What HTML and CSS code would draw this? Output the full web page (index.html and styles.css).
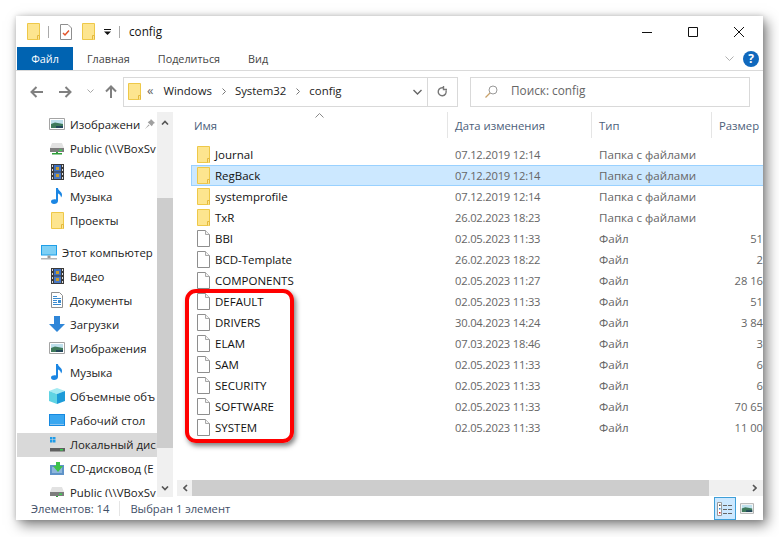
FILE: index.html
```html
<!DOCTYPE html>
<html lang="ru">
<head>
    <meta charset="UTF-8">
    <title>config</title>
    <link rel="stylesheet" href="styles.css">
</head>
<body>
<svg class="defs" width="0" height="0">
    <symbol id="folder" viewBox="0 0 13 17">
        <path d="M.5.5h12v16H.5z" fill="#fde58f" stroke="#eec849"/>
        <path d="M10.5 16.5v-4h2v4" fill="#fde58f" stroke="#e4b93c"/>
    </symbol>
    <symbol id="file" viewBox="0 0 13 17">
        <path d="M.5.5h8l4 4v12H.5z" fill="#fff" stroke="#8e8e8e"/>
        <path d="M8.5.5v4h4" fill="#f2f2f2" stroke="#a8a8a8"/>
    </symbol>
    <symbol id="picture" viewBox="0 0 16 12">
        <path d="M.5.5h15v11H.5z" fill="#fff" stroke="#a4a4a4"/>
        <path d="M2 2h12v5H2z" fill="#bfe0ec"/>
        <path d="M2 6l4-1.500 8 1.500v4H2z" fill="#3f7a5c"/>
        <path d="M7 8h7v2H7z" fill="#23475a"/>
    </symbol>
    <symbol id="net" viewBox="0 0 14 13">
        <path d="M2 1h10l2 5H0z" fill="#e2e2e2"/>
        <path d="M0 6h14v4H0z" fill="#7d7d7d"/>
        <path d="M6 10h2v1h4v1.500H2V11h4z" fill="#2f9e3a"/>
        <path d="M9 7.500h3V9H9z" fill="#3fcf54"/>
    </symbol>
    <symbol id="video" viewBox="0 0 13 16">
        <path d="M0 0h13v16H0z" fill="#3a3a3a"/>
        <path d="M3 1h7v6.500H3z" fill="#3c6fc0"/>
        <path d="M3 8.500h7V15H3z" fill="#4a79c4"/>
        <path d="M5 3h3v3H5zM5 10h3v3H5z" fill="#c59a2f"/>
        <path d="M1 1h1v2H1zM1 5h1v2H1zM1 9h1v2H1zM1 13h1v2H1zM11 1h1v2h-1zM11 5h1v2h-1zM11 9h1v2h-1zM11 13h1v2h-1z" fill="#ddd"/>
    </symbol>
    <symbol id="music" viewBox="0 0 12 16">
        <path d="M5 0h2c0 3 4 3.500 4 7 0 1-.5 2-1 2.500 0-2-1.500-3.500-3-4V13c0 2-2 3-4 3s-3-1-3-2.500S2.500 11 5 11.500z" fill="#1b86e3"/>
    </symbol>
    <symbol id="computer" viewBox="0 0 16 15">
        <path d="M0 0h16v10.500H0z" fill="#1f9fe8"/>
        <path d="M1 1h14v8.500H1z" fill="#7fd0f5"/>
        <path d="M6.500 10.500h3V13h-3z" fill="#9a9a9a"/>
        <path d="M0 13h16v1.500H0z" fill="#b5b5b5"/>
    </symbol>
    <symbol id="docs" viewBox="0 0 12 16">
        <path d="M.5.5h8l3 3v12H.5z" fill="#fff" stroke="#8e8e8e"/>
        <path d="M2 4h4v1H2zM2 6h8v1H2zM2 8h4v1H2zM7 8h3v3H7zM2 10h4v1H2zM2 12h8v1H2z" fill="#3b8bd0"/>
    </symbol>
    <symbol id="down" viewBox="0 0 16 16">
        <path d="M5 0h6v8h5l-8 8-8-8h5z" fill="#2f86d8"/>
    </symbol>
    <symbol id="cube" viewBox="0 0 16 16">
        <path d="M8 0l8 3-8 3-8-3z" fill="#a4eaf2"/>
        <path d="M0 3l8 3v10l-8-3z" fill="#5fd3e3"/>
        <path d="M16 3L8 6v10l8-3z" fill="#1c9bd8"/>
    </symbol>
    <symbol id="desktop" viewBox="0 0 16 12">
        <path d="M0 0h16v12H0z" fill="#1689e0"/>
        <path d="M1 1h14v9H1z" fill="#39a7f0"/>
        <path d="M1 10.500h14v.5H1z" fill="#fff"/>
    </symbol>
    <symbol id="localdisk" viewBox="0 0 15 15">
        <path d="M0 0h2.500v2.500H0zM3 0h2.500v2.500H3zM0 3h2.500v2.500H0zM3 3h2.500v2.500H3z" fill="#1f9be8"/>
        <path d="M3 8h9l3 3H0z" fill="#dcdcdc"/>
        <path d="M0 11h15v3.500H0z" fill="#5f5f5f"/>
        <path d="M10 12h3v1.500h-3z" fill="#39d04f"/>
    </symbol>
    <symbol id="cd" viewBox="0 0 14 13">
        <path d="M0 3h14v10H0z" fill="#5f93c8"/>
        <path d="M2 5h10v6H2z" fill="#8eb6dc"/>
        <path d="M6 0h4v4h3l-5 6-5-6h3z" fill="#3ec24a"/>
    </symbol>
</svg>

<div class="window">
    <div class="titlebar">
        <svg class="ico-folder"><use href="#folder"/></svg>
        <span class="sep"></span>
        <svg class="qa-check" viewBox="0 0 12 16">
            <path d="M.5.500h7.500l3.500 3.500v11.500H.5z" fill="#fff" stroke="#8e8e8e"/>
            <path d="M3 9l2 2 4-4.500" fill="none" stroke="#e2552a" stroke-width="1.500"/>
        </svg>
        <svg class="ico-folder"><use href="#folder"/></svg>
        <svg class="qa-drop" viewBox="0 0 7 6">
            <path d="M0 0h7v1H0z" fill="#111"/>
            <path d="M0 2.500h7L3.500 6z" fill="#111"/>
        </svg>
        <span class="sep"></span>
        <span class="title">config</span>
        <div class="win-btns">
            <svg viewBox="0 0 10 10"><path d="M0 5.500h10" stroke="#111" fill="none"/></svg>
            <svg viewBox="0 0 10 10"><path d="M.5.500h9v9h-9z" stroke="#111" fill="none"/></svg>
            <svg viewBox="0 0 10 10"><path d="M0 0l10 10M10 0L0 10" stroke="#111" fill="none"/></svg>
        </div>
    </div>

    <div class="ribbon">
        <a class="tab tab-file">Файл</a>
        <a class="tab tab-home">Главная</a>
        <a class="tab tab-share">Поделиться</a>
        <a class="tab">Вид</a>
        <svg class="ribbon-chev" viewBox="0 0 9 5"><path d="M.5.500l4 4 4-4" fill="none" stroke="#b0b0b0"/></svg>
        <span class="help">?</span>
    </div>

    <div class="navbar">
        <svg class="nav-arrow" viewBox="0 0 13 12"><path d="M13 6H1.500M6.500 1l-5 5 5 5" fill="none" stroke="#808080" stroke-width="2"/></svg>
        <svg class="nav-arrow nav-forward" viewBox="0 0 13 12"><path d="M0 6h11.500M6.500 1l5 5-5 5" fill="none" stroke="#808080" stroke-width="2"/></svg>
        <svg class="nav-drop" viewBox="0 0 7 4"><path d="M.5.500l3 3 3-3" fill="none" stroke="#a8a8a8"/></svg>
        <svg class="nav-up" viewBox="0 0 12 13"><path d="M6 13V1.500M1 6.500l5-5 5 5" fill="none" stroke="#808080" stroke-width="2"/></svg>
        <div class="address">
            <svg class="ico-folder"><use href="#folder"/></svg>
            <span class="crumb-more">«</span>
            <span class="crumb">Windows</span>
            <svg class="crumb-chev" viewBox="0 0 4 7"><path d="M.5.500l3 3-3 3" fill="none" stroke="#777"/></svg>
            <span class="crumb">System32</span>
            <svg class="crumb-chev" viewBox="0 0 4 7"><path d="M.5.500l3 3-3 3" fill="none" stroke="#777"/></svg>
            <span class="crumb">config</span>
            <svg class="addr-drop" viewBox="0 0 9 6"><path d="M.5 1l4 4 4-4" fill="none" stroke="#666" stroke-width="1.400"/></svg>
            <div class="addr-refresh">
                <svg viewBox="0 0 11 12"><path d="M9 4.500a4 4 0 1 1-2-2.300M6.500 0v3.500H10" fill="none" stroke="#777" stroke-width="1.400"/></svg>
            </div>
        </div>
        <div class="search">
            <svg viewBox="0 0 13 13"><circle cx="8" cy="5" r="4" fill="none" stroke="#999"/><path d="M5 8l-4.500 4.500" stroke="#c9a26a" stroke-width="1.200"/></svg>
            <span class="search-text">Поиск: config</span>
        </div>
    </div>

    <div class="body">
        <div class="sidebar">
            <div class="tree">
                <div class="tree-item"><svg class="i16x12"><use href="#picture"/></svg><span class="lbl lbl-pin">Изображени</span>
                    <svg class="pin" viewBox="0 0 11 11"><path d="M6.500 0L11 4.500 9.500 5 7.500 8 3 3.500 6 1.500zM4 6l-4 5 5-4z" fill="#a0a0a0"/></svg></div>
                <div class="tree-item"><svg class="i14x13"><use href="#net"/></svg><span class="lbl">Public (\\VBoxSv</span></div>
                <div class="tree-item"><svg class="i13x16"><use href="#video"/></svg><span class="lbl">Видео</span></div>
                <div class="tree-item"><svg class="i12x16"><use href="#music"/></svg><span class="lbl">Музыка</span></div>
                <div class="tree-item"><svg class="ico-folder"><use href="#folder"/></svg><span class="lbl">Проекты</span></div>
                <div class="tree-item tree-root"><svg class="i16x15"><use href="#computer"/></svg><span class="lbl">Этот компьютер</span></div>
                <div class="tree-item"><svg class="i13x16"><use href="#video"/></svg><span class="lbl">Видео</span></div>
                <div class="tree-item"><svg class="i12x16"><use href="#docs"/></svg><span class="lbl">Документы</span></div>
                <div class="tree-item"><svg class="i16x16"><use href="#down"/></svg><span class="lbl">Загрузки</span></div>
                <div class="tree-item"><svg class="i16x12"><use href="#picture"/></svg><span class="lbl">Изображения</span></div>
                <div class="tree-item"><svg class="i12x16"><use href="#music"/></svg><span class="lbl">Музыка</span></div>
                <div class="tree-item"><svg class="i16x16"><use href="#cube"/></svg><span class="lbl">Объемные объ</span></div>
                <div class="tree-item"><svg class="i16x12"><use href="#desktop"/></svg><span class="lbl">Рабочий стол</span></div>
                <div class="tree-item is-current"><svg class="i15x15"><use href="#localdisk"/></svg><span class="lbl">Локальный дис</span></div>
                <div class="tree-item"><svg class="i14x13"><use href="#cd"/></svg><span class="lbl">CD-дисковод (E</span></div>
                <div class="tree-item"><svg class="i14x13"><use href="#net"/></svg><span class="lbl">Public (\\VBoxSv</span></div>
            </div>
            <div class="vscroll">
                <svg viewBox="0 0 8 5"><path d="M1 4.500l3-3 3 3" fill="none" stroke="#555" stroke-width="1.600"/></svg>
                <div class="vscroll-track"><div class="vscroll-thumb"></div></div>
                <svg viewBox="0 0 8 5"><path d="M1 .500l3 3 3-3" fill="none" stroke="#555" stroke-width="1.600"/></svg>
            </div>
        </div>

        <div class="main">
            <svg class="sort-mark" viewBox="0 0 9 5"><path d="M.5 4.500l4-4 4 4" fill="none" stroke="#888"/></svg>
            <div class="cols">
                <div class="col col-name">Имя</div>
                <div class="col col-date">Дата изменения</div>
                <div class="col col-type">Тип</div>
                <div class="col col-size">Размер</div>
            </div>
            <div class="rows">
                <div class="row"><div class="cell-name"><svg class="ico-folder"><use href="#folder"/></svg>Journal</div><div class="cell-date">07.12.2019 12:14</div><div class="cell-type">Папка с файлами</div><div class="cell-size"></div></div>
                <div class="row is-selected"><div class="cell-name"><svg class="ico-folder"><use href="#folder"/></svg>RegBack</div><div class="cell-date">07.12.2019 12:14</div><div class="cell-type">Папка с файлами</div><div class="cell-size"></div></div>
                <div class="row"><div class="cell-name"><svg class="ico-folder"><use href="#folder"/></svg>systemprofile</div><div class="cell-date">07.12.2019 12:14</div><div class="cell-type">Папка с файлами</div><div class="cell-size"></div></div>
                <div class="row"><div class="cell-name"><svg class="ico-folder"><use href="#folder"/></svg>TxR</div><div class="cell-date">26.02.2023 18:23</div><div class="cell-type">Папка с файлами</div><div class="cell-size"></div></div>
                <div class="row"><div class="cell-name"><svg class="ico-folder"><use href="#file"/></svg>BBI</div><div class="cell-date">02.05.2023 11:33</div><div class="cell-type">Файл</div><div class="cell-size">51</div></div>
                <div class="row"><div class="cell-name"><svg class="ico-folder"><use href="#file"/></svg>BCD-Template</div><div class="cell-date">26.02.2023 18:22</div><div class="cell-type">Файл</div><div class="cell-size">2</div></div>
                <div class="row"><div class="cell-name"><svg class="ico-folder"><use href="#file"/></svg>COMPONENTS</div><div class="cell-date">02.05.2023 11:27</div><div class="cell-type">Файл</div><div class="cell-size">28 16</div></div>
                <div class="row"><div class="cell-name"><svg class="ico-folder"><use href="#file"/></svg>DEFAULT</div><div class="cell-date">02.05.2023 11:33</div><div class="cell-type">Файл</div><div class="cell-size">51</div></div>
                <div class="row"><div class="cell-name"><svg class="ico-folder"><use href="#file"/></svg>DRIVERS</div><div class="cell-date">30.04.2023 14:24</div><div class="cell-type">Файл</div><div class="cell-size">3 84</div></div>
                <div class="row"><div class="cell-name"><svg class="ico-folder"><use href="#file"/></svg>ELAM</div><div class="cell-date">07.03.2023 18:46</div><div class="cell-type">Файл</div><div class="cell-size">3</div></div>
                <div class="row"><div class="cell-name"><svg class="ico-folder"><use href="#file"/></svg>SAM</div><div class="cell-date">02.05.2023 11:33</div><div class="cell-type">Файл</div><div class="cell-size">6</div></div>
                <div class="row"><div class="cell-name"><svg class="ico-folder"><use href="#file"/></svg>SECURITY</div><div class="cell-date">02.05.2023 11:33</div><div class="cell-type">Файл</div><div class="cell-size">6</div></div>
                <div class="row"><div class="cell-name"><svg class="ico-folder"><use href="#file"/></svg>SOFTWARE</div><div class="cell-date">02.05.2023 11:33</div><div class="cell-type">Файл</div><div class="cell-size">70 65</div></div>
                <div class="row"><div class="cell-name"><svg class="ico-folder"><use href="#file"/></svg>SYSTEM</div><div class="cell-date">02.05.2023 11:33</div><div class="cell-type">Файл</div><div class="cell-size">11 00</div></div>
            </div>
            <div class="hscroll">
                <svg class="hs-arrow" viewBox="0 0 5 8"><path d="M4 1L1 4l3 3" fill="none" stroke="#555" stroke-width="1.600"/></svg>
                <div class="hs-thumb"></div>
                <svg class="hs-arrow" viewBox="0 0 5 8"><path d="M1 1l3 3-3 3" fill="none" stroke="#555" stroke-width="1.600"/></svg>
            </div>
            <div class="highlight-box"></div>
        </div>
    </div>

    <div class="statusbar">
        <span class="st-count">Элементов: 14</span>
        <span class="st-selected">Выбран 1 элемент</span>
        <div class="view-btns">
            <span class="view-btn is-on">
                <svg viewBox="0 0 16 14"><path d="M.5.500h4v13h-4z" fill="#fff" stroke="#999"/><path d="M2 2.500h1.500V4H2z" fill="#555"/><path d="M2 6h1.500v1.500H2z" fill="#2a8fdc"/><path d="M2 10h1.500v1.500H2z" fill="#d22"/><path d="M6 3h4v1H6zM11 3h4v1h-4zM6 7h4v1H6zM11 7h4v1h-4zM6 11h4v1H6zM11 11h4v1h-4z" fill="#666"/></svg>
            </span>
            <span class="view-btn"><svg class="i14x12"><use href="#picture"/></svg></span>
        </div>
    </div>
</div>
</body>
</html>
```

FILE: styles.css
```css
* {
    box-sizing: border-box;
}

html, body {
    height: 100%;
}

body {
    margin: 0;
    padding: 16px 16px 17px 16px;
    background: #fff;
    font-family: "Open Sans", "Noto Sans", sans-serif;
    font-size: 11.500px;
    color: #222;
    overflow: hidden;
}

.defs {
    position: absolute;
}

svg {
    display: block;
    flex: none;
}

.window {
    width: 747px;
    height: 504px;
    background: #fff;
    display: flex;
    flex-direction: column;
    overflow: hidden;
    box-shadow: 4px 5px 12px rgba(0, 0, 0, 0.5), 0 0 5px rgba(0, 0, 0, 0.15);
}

/* title bar */
.titlebar {
    height: 31px;
    display: flex;
    align-items: center;
    padding-left: 11px;
    flex: none;
}

.ico-folder {
    width: 13px;
    height: 17px;
}

.sep {
    width: 1px;
    height: 12px;
    background: #aaa;
    margin: 0 11px 0 8px;
}

.qa-check {
    width: 12px;
    height: 16px;
    margin-right: 10px;
}

.qa-drop {
    width: 7px;
    height: 6px;
    margin-left: 9px;
}

.title {
    margin: -2px 0 0 -2px;
    font-size: 11.700px;
    color: #111;
}

.win-btns {
    margin-left: auto;
    display: flex;
    gap: 36px;
    padding-right: 19px;
}

.win-btns svg {
    width: 10px;
    height: 10px;
}

/* ribbon */
.ribbon {
    height: 24px;
    flex: none;
    display: flex;
    align-items: center;
    border-bottom: 1px solid #dadada;
    padding-left: 1px;
    font-size: 10.800px;
    color: #444;
}

.tab {
    display: block;
    line-height: 23px;
    padding: 0 11px;
}

.tab-file {
    width: 56px;
    text-align: center;
    padding: 0;
    background: #0063b1;
    color: #fff;
    margin-right: 4px;
}

.tab-home {
    margin-right: 6px;
    padding-left: 10px;
}

.tab-share {
    margin-right: 6px;
}

.ribbon-chev {
    width: 9px;
    height: 5px;
    margin-left: auto;
    margin-right: 9px;
}

.help {
    width: 16px;
    height: 16px;
    border-radius: 50%;
    background: #0f68bd;
    color: #fff;
    font-weight: 700;
    font-size: 12px;
    line-height: 16px;
    text-align: center;
    margin-right: 4px;
}

/* nav bar */
.navbar {
    height: 41px;
    flex: none;
    display: flex;
    align-items: center;
    padding-left: 14px;
}

.nav-arrow {
    width: 13px;
    height: 12px;
    margin-right: 16px;
}

.nav-drop {
    width: 7px;
    height: 4px;
    margin: 0 11px 2px -1px;
}

.nav-up {
    width: 12px;
    height: 13px;
    margin-right: 6px;
}

.address {
    width: 335px;
    height: 30px;
    border: 1px solid #d9d9d9;
    display: flex;
    align-items: center;
    padding-left: 4px;
    font-size: 11.400px;
    color: #222;
}

.crumb {
    margin-top: -2px;
}

.crumb-more {
    margin: -3px 10px 0 6px;
    font-size: 13px;
    color: #666;
}

.crumb-chev {
    width: 4px;
    height: 7px;
    margin: 0 9px 0 10px;
}

.addr-drop {
    width: 9px;
    height: 6px;
    margin-left: auto;
    margin-right: 5px;
}

.addr-refresh {
    width: 30px;
    height: 100%;
    border-left: 1px solid #d9d9d9;
    display: flex;
    align-items: center;
    justify-content: center;
}

.addr-refresh svg {
    width: 11px;
    height: 12px;
}

.search {
    width: 280px;
    height: 30px;
    margin-left: 12px;
    border: 1px solid #d9d9d9;
    display: flex;
    align-items: center;
    padding-left: 14px;
    font-size: 11.800px;
    color: #666;
}

.search svg {
    width: 13px;
    height: 13px;
    margin-right: 13px;
}

.search-text {
    margin-top: -3px;
}

/* body */
.body {
    flex: 1;
    min-height: 0;
    display: flex;
}

.sidebar {
    width: 157px;
    flex: none;
    display: flex;
    padding-left: 1px;
}

.tree {
    width: 140px;
    flex: none;
    overflow: hidden;
    padding-top: 1px;
}

.tree-item {
    height: 24px;
    display: flex;
    align-items: center;
    padding-left: 32px;
    padding-bottom: 2px;
    white-space: nowrap;
    color: #222;
    font-size: 11.400px;
}

.tree-item > svg:first-child {
    margin: 0 calc((16px - var(--w, 16px)) / 2);
}

.tree-root {
    margin-top: 8px;
    padding-left: 24px;
}

.is-current {
    background: #d9d9d9;
}

.lbl {
    margin-left: 5px;
    flex: none;
}

.lbl-pin {
    margin-right: 5px;
}

.pin {
    width: 10px;
    height: 10px;
}

.tree .ico-folder { --w: 13px; }
.i16x12 { width: 16px; height: 12px; }
.i14x12 { width: 14px; height: 11px; }
.i14x13 { width: 14px; height: 13px; --w: 14px; }
.i13x16 { width: 13px; height: 16px; --w: 13px; }
.i12x16 { width: 12px; height: 16px; --w: 12px; }
.i16x15 { width: 16px; height: 15px; }
.i16x16 { width: 16px; height: 16px; }
.i15x15 { width: 15px; height: 15px; --w: 15px; }

.vscroll {
    width: 16px;
    flex: none;
    background: #f0f0f0;
    display: flex;
    flex-direction: column;
    align-items: center;
    padding: 8px 0 6px;
}

.vscroll > svg {
    width: 8px;
    height: 5px;
    flex: none;
}

.vscroll-track {
    flex: 1;
    width: 100%;
    padding-top: 73px;
}

.vscroll-thumb {
    height: 250px;
    background: #cdcdcd;
}

/* file list */
.main {
    flex: 1;
    min-width: 0;
    margin-left: 3px;
    display: flex;
    flex-direction: column;
    position: relative;
}

.sort-mark {
    position: absolute;
    left: 139px;
    top: 1px;
    width: 9px;
    height: 5px;
}

.cols {
    height: 32px;
    flex: none;
    display: flex;
    color: #4c607a;
    font-size: 11.300px;
}

.col {
    padding-left: 7px;
    line-height: 28px;
    height: 26px;
    border-right: 1px solid #e5e5e5;
    white-space: nowrap;
}

.col-name {
    width: 272px;
    padding-left: 18px;
}

.col-date {
    width: 144px;
}

.col-type {
    width: 120px;
}

.col-size {
    flex: 1;
    border-right: none;
}

.rows {
    flex: 1;
    min-height: 0;
}

.row {
    height: 21px;
    display: flex;
    align-items: center;
    white-space: nowrap;
    border: 1px solid transparent;
    border-right: none;
    overflow: hidden;
    font-size: 11.500px;
}

.row.is-selected {
    background: #cce8ff;
    border-color: #99d1ff;
    margin-left: 15px;
}

.cell-name {
    width: 271px;
    padding-left: 20px;
    display: flex;
    align-items: center;
    gap: 5px;
    color: #111;
}

.is-selected .cell-name {
    width: 256px;
    padding-left: 5px;
}

.cell-date {
    width: 144px;
    padding-left: 7px;
    color: #666;
    font-size: 11.200px;
    letter-spacing: -0.200px;
}

.cell-type {
    width: 120px;
    padding-left: 7px;
    color: #666;
    font-size: 11.600px;
}

.cell-size {
    flex: 1;
    color: #666;
    text-align: right;
    font-size: 11.200px;
}

.hscroll {
    height: 16px;
    flex: none;
    background: #f0f0f0;
    display: flex;
    align-items: center;
    margin-left: 1px;
    margin-bottom: 1px;
}

.hs-arrow {
    width: 5px;
    height: 8px;
    margin: 0 6px;
}

.hs-thumb {
    width: 517px;
    height: 100%;
    background: #cdcdcd;
    margin-left: -2px;
    margin-right: auto;
}

.highlight-box {
    position: absolute;
    left: 9px;
    top: 177px;
    width: 109px;
    height: 154px;
    border: 4px solid #f00;
    border-radius: 11px;
    box-shadow: 2px 3px 5px rgba(0, 0, 0, 0.5);
}

/* status bar */
.statusbar {
    height: 23px;
    flex: none;
    display: flex;
    align-items: center;
    padding-left: 15px;
    font-size: 11.200px;
    color: #3f4f68;
}

.st-count {
    padding-right: 10px;
    border-right: 1px solid #e5e5e5;
    margin-right: 10px;
}

.view-btns {
    margin-left: auto;
    display: flex;
    align-items: center;
    padding-right: 5px;
}

.view-btn {
    width: 22px;
    height: 23px;
    display: flex;
    align-items: center;
    justify-content: center;
}

.view-btn.is-on {
    background: #cce8ff;
    border: 1px solid #3f9fd8;
}

.view-btn svg {
    width: 16px;
    height: 14px;
}

.view-btn .i14x12 {
    width: 14px;
    height: 11px;
}
```
